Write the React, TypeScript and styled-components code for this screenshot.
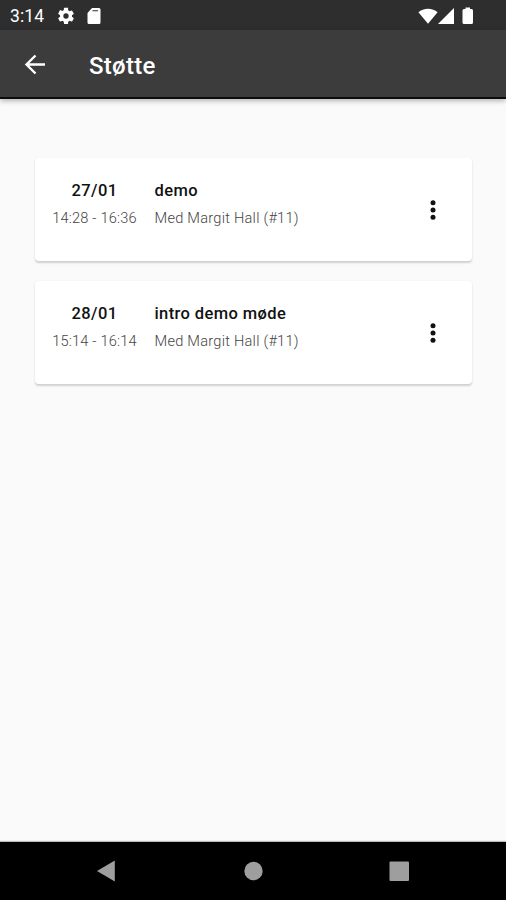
import React from "react";
import styled, { createGlobalStyle } from "styled-components";

const GlobalStyle = createGlobalStyle`
  * { box-sizing: border-box; }
  body { margin: 0; background: #fafafa; font-family: Roboto, "Liberation Sans", sans-serif; }
`;

const Screen = styled.div`
  display: flex;
  flex-direction: column;
  width: 100%;
  height: 900px;
  background: #fafafa;
  overflow: hidden;
`;

const StatusBar = styled.div`
  flex: none;
  display: flex;
  align-items: center;
  height: 30px;
  padding: 1px 32px 0 10px;
  background: #2e2e2e;
  color: #fff;
`;

const Clock = styled.span`
  width: 46px;
  font-size: 17.5px;
  line-height: 30px;
  letter-spacing: 0.1px;
`;

const StatusIcon = styled.svg<{ $gap?: number }>`
  display: block;
  flex: none;
  margin-left: ${({ $gap = 0 }) => $gap}px;
  fill: #fff;
`;

const Spacer = styled.div`
  flex: 1;
`;

const AppBar = styled.header`
  flex: none;
  display: flex;
  align-items: center;
  height: 69px;
  padding: 0 0 0 24px;
  background: #3c3c3c;
  border-bottom: 2px solid #0c0c0c;
  box-shadow: 0 2px 5px rgba(0, 0, 0, 0.28);
`;

const IconButton = styled.button`
  display: flex;
  align-items: center;
  justify-content: center;
  padding: 0;
  border: 0;
  background: none;
`;

const Title = styled.h1`
  margin: 5px 0 0 43px;
  color: #fff;
  font-size: 24px;
  font-weight: 500;
  line-height: 28px;
  letter-spacing: 0.3px;
`;

const Meetings = styled.main`
  flex: 1;
  display: flex;
  flex-direction: column;
  gap: 20px;
  padding: 59px 34px 0 35px;
`;

const Card = styled.article`
  display: flex;
  height: 103px;
  padding: 20px 29px 0 0;
  background: #fff;
  border-radius: 4px;
  box-shadow: 0 1.5px 2px rgba(0, 0, 0, 0.17);
`;

const Column = styled.div<{ $date?: boolean }>`
  width: ${({ $date }) => ($date ? "119.5px" : "auto")};
  flex: ${({ $date }) => ($date ? "none" : "1")};
  text-align: ${({ $date }) => ($date ? "center" : "left")};
  padding-right: ${({ $date }) => ($date ? "0.5px" : "0")};
`;

const Heading = styled.div`
  padding-top: 1px;
  color: #111;
  font-size: 16.5px;
  font-weight: 500;
  line-height: 24px;
  letter-spacing: 0.4px;
`;

const Detail = styled.div<{ $spacing?: number }>`
  margin-top: 3px;
  color: #444;
  font-size: 14.6px;
  font-weight: 300;
  line-height: 24px;
  letter-spacing: ${({ $spacing = 0 }) => $spacing}px;
  white-space: nowrap;
`;

const MenuButton = styled(IconButton)`
  width: 20px;
  height: 24px;
  margin-top: 20px;
`;

const NavBar = styled.nav`
  flex: none;
  display: flex;
  align-items: center;
  justify-content: space-between;
  height: 58px;
  padding: 0 96px 1px;
  background: #000;
  box-shadow: 0 -1px 1px rgba(0, 0, 0, 0.25);
`;

const meetings = [
  { date: "27/01", time: "14:28 - 16:36", title: "demo", person: "Med Margit Hall (#11)" },
  { date: "28/01", time: "15:14 - 16:14", title: "intro demo møde", person: "Med Margit Hall (#11)" },
];

export default function App() {
  return (
    <Screen>
      <GlobalStyle />
      <StatusBar>
        <Clock>3:14</Clock>
        <StatusIcon width="20" height="20" viewBox="0 0 24 24">
          <path d="M19.14 12.94c.04-.3.06-.61.06-.94s-.02-.64-.07-.94l2.03-1.58a.49.49 0 0 0 .12-.61l-1.92-3.32a.49.49 0 0 0-.59-.22l-2.39.96a7 7 0 0 0-1.62-.94l-.36-2.54A.48.48 0 0 0 13.92 2h-3.84a.48.48 0 0 0-.47.41l-.36 2.54c-.59.24-1.13.57-1.62.94l-2.39-.96a.48.48 0 0 0-.59.22L2.74 8.87c-.12.21-.08.47.12.61l2.03 1.58a6 6 0 0 0 0 1.88l-2.03 1.58a.49.49 0 0 0-.12.61l1.92 3.32c.12.22.37.29.59.22l2.39-.96c.5.38 1.03.7 1.62.94l.36 2.54c.05.24.24.41.48.41h3.84c.24 0 .44-.17.47-.41l.36-2.54a7 7 0 0 0 1.62-.94l2.39.96c.22.08.47 0 .59-.22l1.92-3.32a.49.49 0 0 0-.12-.61zM12 15.2a3.2 3.2 0 1 1 0-6.4 3.2 3.2 0 0 1 0 6.4z" />
        </StatusIcon>
        <StatusIcon width="14" height="16" viewBox="0 0 14 16" $gap={10.5}>
          <path fillRule="evenodd" d="M5 0h7a1.5 1.5 0 0 1 1.5 1.5v13A1.5 1.5 0 0 1 12 16H2a1.5 1.5 0 0 1-1.5-1.5V5zM5.5 2.2v1H11v-1z" />
        </StatusIcon>
        <Spacer />
        <StatusIcon width="20" height="16" viewBox="0 0 20 16">
          <path d="M.4 4.2C5.5-.5 14.5-.5 19.6 4.2L10 15.8z" />
        </StatusIcon>
        <StatusIcon width="16" height="16" viewBox="0 0 16 16">
          <path d="M0 16 16 0v16z" />
        </StatusIcon>
        <StatusIcon width="12" height="18" viewBox="0 0 12 18" $gap={8}>
          <path d="M3.5.5H8V2h1.5Q11 2 11 3.5v12Q11 17 9.5 17H2Q.5 17 .5 15.5v-12Q.5 2 2 2h1.5z" />
        </StatusIcon>
      </StatusBar>
      <AppBar>
        <IconButton aria-label="Tilbage">
          <svg width="22" height="22" viewBox="0 0 22 22" fill="none" stroke="#fff" strokeWidth="2.4">
            <path d="M21 11.5H3M11.5 2.5 2.5 11.5 11.5 20.5" />
          </svg>
        </IconButton>
        <Title>Støtte</Title>
      </AppBar>
      <Meetings>
        {meetings.map((meeting) => (
          <Card key={meeting.date}>
            <Column $date>
              <Heading>{meeting.date}</Heading>
              <Detail $spacing={0.18}>{meeting.time}</Detail>
            </Column>
            <Column>
              <Heading>{meeting.title}</Heading>
              <Detail $spacing={0.25}>{meeting.person}</Detail>
            </Column>
            <MenuButton aria-label="Flere valg">
              <svg width="6" height="20" viewBox="0 0 6 20" fill="#111">
                <circle cx="3" cy="2.7" r="2.5" />
                <circle cx="3" cy="10" r="2.5" />
                <circle cx="3" cy="17.3" r="2.5" />
              </svg>
            </MenuButton>
          </Card>
        ))}
      </Meetings>
      <NavBar>
        <IconButton aria-label="Tilbage">
          <svg width="20" height="22" viewBox="0 0 20 22" fill="#9e9e9e"><path d="M1 11 18.8.5v21z" /></svg>
        </IconButton>
        <IconButton aria-label="Hjem">
          <svg width="22" height="20" viewBox="0 0 22 20" fill="#9e9e9e"><circle cx="12.5" cy="10" r="9.2" /></svg>
        </IconButton>
        <IconButton aria-label="Oversigt">
          <svg width="22" height="20" viewBox="0 0 22 20" fill="#9e9e9e"><rect x="1.5" y=".5" width="19.5" height="19.5" rx="1" /></svg>
        </IconButton>
      </NavBar>
    </Screen>
  );
}
